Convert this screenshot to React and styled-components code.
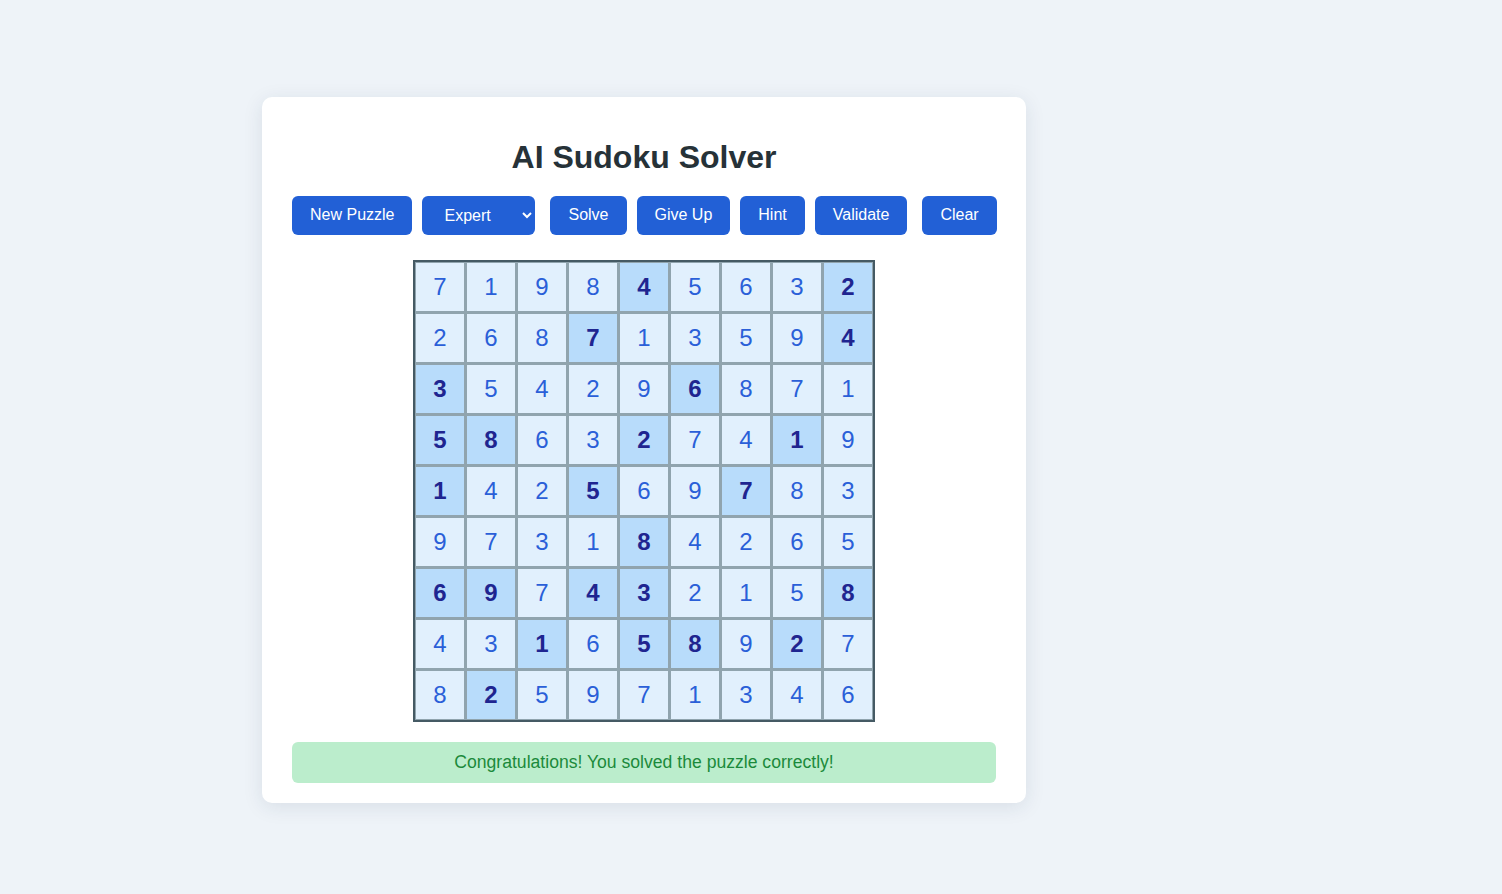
import React, { useState } from "react";
import styled, { createGlobalStyle } from "styled-components";

// value, given (bold)
const board = [
  [[7], [1], [9], [8], [4, 1], [5], [6], [3], [2, 1]],
  [[2], [6], [8], [7, 1], [1], [3], [5], [9], [4, 1]],
  [[3, 1], [5], [4], [2], [9], [6, 1], [8], [7], [1]],
  [[5, 1], [8, 1], [6], [3], [2, 1], [7], [4], [1, 1], [9]],
  [[1, 1], [4], [2], [5, 1], [6], [9], [7, 1], [8], [3]],
  [[9], [7], [3], [1], [8, 1], [4], [2], [6], [5]],
  [[6, 1], [9, 1], [7], [4, 1], [3, 1], [2], [1], [5], [8, 1]],
  [[4], [3], [1, 1], [6], [5, 1], [8, 1], [9], [2, 1], [7]],
  [[8], [2, 1], [5], [9], [7], [1], [3], [4], [6]],
];

function App() {
  const [level, setLevel] = useState("expert");

  return (
    <Page>
      <GlobalStyle />
      <Card>
        <Title>AI Sudoku Solver</Title>
        <Controls>
          <Button>New Puzzle</Button>
          <Select value={level} onChange={(e) => setLevel(e.target.value)}>
            <option value="easy">Easy</option>
            <option value="medium">Medium</option>
            <option value="hard">Hard</option>
            <option value="expert">Expert</option>
          </Select>
          <Button $spaced>Solve</Button>
          <Button>Give Up</Button>
          <Button>Hint</Button>
          <Button>Validate</Button>
          <Button $spaced>Clear</Button>
        </Controls>
        <Board>
          {board.flat().map(([value, given], i) => (
            <Cell key={i} $given={!!given}>
              {value}
            </Cell>
          ))}
        </Board>
        <Message>Congratulations! You solved the puzzle correctly!</Message>
      </Card>
    </Page>
  );
}

const GlobalStyle = createGlobalStyle`
  body {
    margin: 0;
    background: #eef3f8;
    font-family: "Liberation Sans", Arial, sans-serif;
  }
`;

const Page = styled.div`
  min-height: 894px;
  box-sizing: border-box;
  padding: 97px 0 0 262px;
`;

const Card = styled.div`
  width: 764px;
  box-sizing: border-box;
  background: #ffffff;
  border-radius: 10px;
  padding: 20px 30px;
  box-shadow: 0 4px 20px rgba(30, 50, 80, 0.1);
`;

const Title = styled.h1`
  margin: 22px 0 20px;
  text-align: center;
  font-size: 32px;
  font-weight: 700;
  color: #263238;
`;

const Controls = styled.div`
  display: flex;
  gap: 10px;
  margin-bottom: 25px;
`;

const Button = styled.button`
  flex-shrink: 0;
  white-space: nowrap;
  height: 39px;
  padding: 0 18px 2px;
  margin-left: ${(p) => (p.$spaced ? "5px" : "0")};
  border: none;
  border-radius: 6px;
  background: #2260d6;
  color: #ffffff;
  font-family: "Liberation Sans", Arial, sans-serif;
  font-size: 16px;
  cursor: pointer;
`;

const Select = styled.select`
  flex-shrink: 0;
  width: 113px;
  height: 39px;
  padding: 0 6px 0 18px;
  border: none;
  border-radius: 6px;
  background-color: #2260d6;
  color: #ffffff;
  font-family: "Liberation Sans", Arial, sans-serif;
  font-size: 16px;
`;

const Board = styled.div`
  display: grid;
  grid-template-columns: repeat(9, 48px);
  grid-auto-rows: 48px;
  gap: 3px;
  width: max-content;
  margin: 0 auto 20px;
  padding: 1px;
  background: #90a4ae;
  border: 2px solid #455a64;
`;

const Cell = styled.div`
  display: flex;
  align-items: center;
  justify-content: center;
  background: ${(p) => (p.$given ? "#b8dcfb" : "#e1f0fd")};
  color: ${(p) => (p.$given ? "#1f2590" : "#2a5fd8")};
  font-weight: ${(p) => (p.$given ? 700 : 400)};
  font-size: 24px;
`;

const Message = styled.div`
  height: 41px;
  display: flex;
  align-items: center;
  justify-content: center;
  border-radius: 6px;
  background: #bbedcc;
  color: #1b8a3b;
  font-size: 17.6px;
`;

export default App;
